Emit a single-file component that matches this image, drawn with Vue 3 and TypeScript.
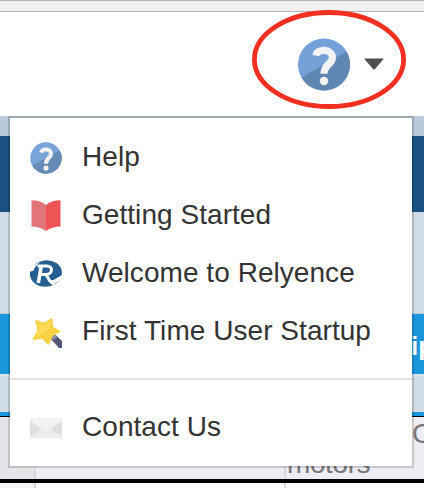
<script setup lang="ts">
type IconName = 'help' | 'book' | 'brand' | 'wand' | 'mail'

interface MenuItem {
  label: string
  icon: IconName
}

const groups: MenuItem[][] = [
  [
    { label: 'Help', icon: 'help' },
    { label: 'Getting Started', icon: 'book' },
    { label: 'Welcome to Relyence', icon: 'brand' },
    { label: 'First Time User Startup', icon: 'wand' },
  ],
  [{ label: 'Contact Us', icon: 'mail' }],
]
</script>

<template>
  <div class="page">
    <div class="chrome"></div>
    <header class="header">
      <button class="trigger" aria-haspopup="true">
        <svg class="trigger-icon" viewBox="0 0 54 54">
          <circle cx="27" cy="27" r="26.5" fill="#74a2d8" />
          <path d="M49.95 13.75A26.5 26.5 0 0 1 4.05 40.25Z" fill="#6087b2" />
          <path d="M18.8 18C20 10.5 36 10.5 35.5 20.5C35 27 27 26.5 27 36.5" fill="none" stroke="#f3f3f3" stroke-width="7.4" />
          <circle cx="27" cy="43.8" r="4.3" fill="#f3f3f3" />
        </svg>
        <svg class="caret" viewBox="0 0 20 12">
          <path d="M1 .5H19Q20 .5 19.2 1.6L11 11Q10 12 9 11L.8 1.6Q0 .5 1 .5Z" fill="#505050" />
        </svg>
      </button>
      <svg class="highlight" viewBox="0 0 154 100">
        <ellipse cx="77" cy="49.5" rx="74.6" ry="47" fill="none" stroke="#f23022" stroke-width="4.8" />
      </svg>
    </header>

    <div class="band pale"></div>
    <div class="band navy"></div>
    <div class="band toolbar"></div>
    <div class="band heading"><span>ip</span></div>
    <div class="band filter"></div>
    <div class="row">
      <div class="cell index"></div>
      <div class="cell"></div>
      <div class="cell detail">
        <span class="first-line">C</span>
        <span class="second-line">motors</span>
      </div>
    </div>
    <div class="row next">
      <div class="cell index"></div>
      <div class="cell"></div>
      <div class="cell detail"></div>
    </div>

    <nav class="menu">
      <ul v-for="(group, index) in groups" :key="index" class="group">
        <li v-for="item in group" :key="item.label" class="item">
          <svg v-if="item.icon === 'help'" class="icon" viewBox="0 0 54 54">
            <circle cx="27" cy="27" r="26.5" fill="#78a4d8" />
            <path d="M49.95 13.75A26.5 26.5 0 0 1 4.05 40.25Z" fill="#658bb7" />
            <path d="M18.8 18C20 10.5 36 10.5 35.5 20.5C35 27 27 26.5 27 36.5" fill="none" stroke="#f3f3f3" stroke-width="7" />
            <circle cx="27" cy="43.8" r="4.3" fill="#f3f3f3" />
          </svg>
          <svg v-else-if="item.icon === 'book'" class="icon" viewBox="0 0 32 32">
            <path d="M1.5 .3C7 .3 12 1.5 16 5V31C12 28 7 26.5 1.5 26.5Z" fill="#e27578" />
            <path d="M30.5 .3C25 .3 20 1.5 16 5V31C20 28 25 26.5 30.5 26.5Z" fill="#ee5456" />
          </svg>
          <svg v-else-if="item.icon === 'brand'" class="icon" viewBox="0 0 32 32">
            <ellipse cx="16" cy="15.5" rx="16" ry="13.2" fill="#245f90" transform="rotate(-7 16 16)" />
            <path d="M0 9L5 6.5L10 4L5.5 8.5L3 13L0 13.5Z" fill="#fff" />
            <path d="M8.3 25L11.2 8.5" fill="none" stroke="#fff" stroke-width="3.6" />
            <path d="M7.5 8H16.5C24 8 22.5 16.5 16 16.5H11M16 16.5L20.5 24" fill="none" stroke="#fff" stroke-width="3" />
            <path d="M19 22.5L23.5 22L32 17L31 21L23 27.5L20 25Z" fill="#fff" />
          </svg>
          <svg v-else-if="item.icon === 'wand'" class="icon" viewBox="0 0 32 32">
            <path d="M19.5 21.5L24 17.5L32 25V32H29Z" fill="#535879" />
            <path d="M20.5 21.5L24 18L27 21L23.5 24Z" fill="#8c91aa" />
            <path d="M6.5 5L14 8L21.5 3.5L22 11.5L29 15.5L22 19L18.2 27.5L12.5 21.5L4 22.8L8.5 14.5Z" fill="#f9d145" stroke="#f9d145" stroke-width="2.2" stroke-linejoin="round" />
            <path d="M6.5 5.5L14 9L21 4.5L20 12L9.5 20L4.5 22L9.5 14.5Z" fill="#fcdb58" />
          </svg>
          <svg v-else class="icon" viewBox="0 0 32 32">
            <path d="M0 7H32V28H0Z" fill="#ededeb" />
            <path d="M0 10L12 18L0 25ZM32 10L20 18L32 25Z" fill="#dfdfdd" />
            <path d="M0 7H32V10L18 19Q16 20.5 14 19L0 10Z" fill="#f3f2f1" />
            <path d="M0 26.5H32V28H0Z" fill="#f6f6f5" />
          </svg>
          <span class="label">{{ item.label }}</span>
        </li>
      </ul>
    </nav>
  </div>
</template>

<style>
body {
  margin: 0;
}
</style>

<style scoped>
.page {
  position: relative;
  display: flex;
  flex-direction: column;
  width: 424px;
  height: 488px;
  overflow: hidden;
  background: #fff;
  font-family: "Liberation Sans", Arial, sans-serif;
}

.page * {
  box-sizing: border-box;
}

.chrome {
  flex: none;
  height: 12px;
  background: #f0f0f0;
  border-top: 1px solid #b2b2b2;
  border-bottom: 1px solid #b2b2b2;
}

.header {
  position: relative;
  flex: none;
  display: flex;
  justify-content: flex-end;
  height: 104px;
  padding: 25px 40px 0 0;
}

.trigger {
  display: flex;
  align-items: center;
  gap: 13px;
  height: 54px;
  padding: 0;
  border: 0;
  background: none;
}

.trigger-icon {
  width: 54px;
  height: 53px;
}

.caret {
  width: 20px;
  height: 12px;
}

.highlight {
  position: absolute;
  top: -2px;
  left: 252px;
  width: 154px;
  height: 100px;
}

.band {
  flex: none;
}

.pale {
  height: 20px;
  background: #b9cadb;
}

.navy {
  height: 76px;
  background: #195281;
}

.toolbar {
  height: 102px;
  background: #d0dce5;
  border-bottom: 1px solid #c1cbd2;
}

.heading {
  display: flex;
  align-items: center;
  justify-content: flex-end;
  height: 60px;
  background: #1b95dc;
  color: #fff;
  font-size: 26px;
  font-weight: 700;
}

.heading span {
  width: 13px;
  padding-top: 4px;
}

.filter {
  height: 43px;
  background: #d0dce5;
  border-top: 2px solid #dce5eb;
  border-bottom: 1px solid #050510;
  box-shadow: inset 0 -4px #1b95dc;
}

.row {
  flex: none;
  display: grid;
  grid-template-columns: 36px 250px 1fr;
  height: 66px;
  background: #eeedf3;
  border-bottom: 4px solid #000;
  color: #77777b;
  font-size: 28px;
}

.cell {
  border-right: 2px solid #d9d8dd;
}

.index {
  background: #e5e4e9;
}

.detail {
  display: flex;
  flex-direction: column;
  border-right: 0;
  line-height: 34px;
  white-space: nowrap;
}

.first-line {
  padding-left: 126px;
}

.second-line {
  height: 28px;
  padding-left: 1px;
  line-height: 26px;
  letter-spacing: -0.4px;
}

.next {
  height: 5px;
  border: 0;
  background: #fff;
}

.next .index {
  background: #f5f5f5;
}

.menu {
  position: absolute;
  top: 116px;
  left: 8px;
  width: 406px;
  height: 352px;
  border: 2px solid rgba(0, 0, 0, 0.16);
  background: #fff;
  background-clip: padding-box;
}

.group {
  margin: 0;
  padding: 10px 0 18px;
  list-style: none;
}

.group + .group {
  border-top: 2px solid #e2e2e2;
  padding: 18px 0 0;
}

.item {
  display: flex;
  align-items: center;
  gap: 20px;
  height: 58px;
  padding-left: 20px;
}

.icon {
  flex: none;
  width: 32px;
  height: 32px;
}

.group:first-child .icon {
  margin-top: 2px;
}

.label {
  color: #333;
  font-size: 28px;
  line-height: 32px;
  letter-spacing: 0.05px;
  white-space: nowrap;
}
</style>
